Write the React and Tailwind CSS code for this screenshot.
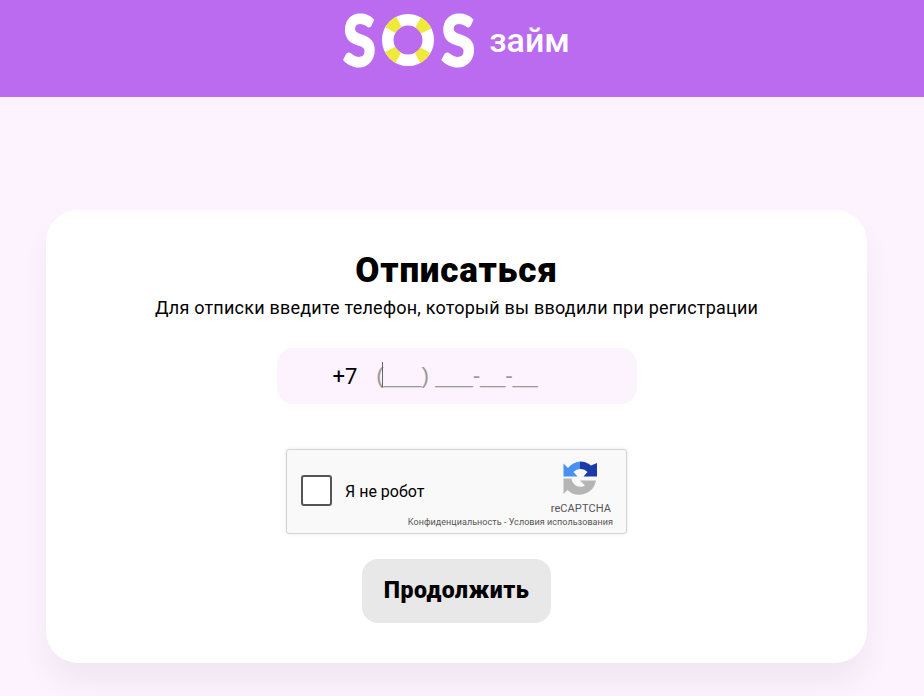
import React from 'react';

function LifeRing() {
    return (
        <svg width="52" height="52" viewBox="0 0 54 54" className="shrink-0">
            <circle cx="27" cy="27" r="21" fill="none" stroke="#ffffff" strokeWidth="12" />
            <circle cx="27" cy="27" r="21" fill="none" stroke="#efe93a" strokeWidth="12" strokeDasharray="12.5 20.49" strokeDashoffset="6.25" transform="rotate(45 27 27)" />
        </svg>
    );
}

function RecaptchaLogo() {
    return (
        <svg width="35" height="36" viewBox="0 0 35 36">
            <path d="M17 0.5 L17 8 A9 9 0 0 0 10.5 11 L14.5 15.5 L0.5 15.5 L0.5 2.5 L5 7 A17 17 0 0 1 17 0.5 Z" fill="#4a90f2" />
            <path d="M17 0.5 A17 17 0 0 1 28 4.5 L34 2 L34 15.5 L20.5 15.5 L24.5 11 A9 9 0 0 0 17 8 Z" fill="#1c3aa9" />
            <path d="M0.5 17.5 L8.5 17.5 A9 9 0 0 0 22 24.5 L17 19.5 L33 19.5 A17 17 0 0 1 4.5 29 L0.5 33 Z" fill="#b5b5b5" />
        </svg>
    );
}

function Recaptcha() {
    return (
        <div className="w-[341px] h-[85px] mt-[45px] bg-[#f9f9f9] border border-[#d3d3d3] rounded-[3px] shadow-[0_0_4px_rgba(0,0,0,0.08)] flex font-['Roboto',sans-serif]">
            <div className="flex items-center flex-1 min-w-0 pl-[14px] pb-[2px]">
                <div className="w-[31px] h-[31px] bg-white border-2 border-[#555555] rounded-[3px] shrink-0"></div>
                <span className="ml-[13px] mt-[2px] text-[16px] text-black whitespace-nowrap">Я не робот</span>
            </div>
            <div className="flex flex-col items-end shrink-0 pr-[13px] pt-[11px] text-[#555555]">
                <div className="pr-[15px]">
                    <RecaptchaLogo />
                </div>
                <span className="text-[11px] leading-[13px] mt-[5px] pr-[2px] tracking-[0.1px]">reCAPTCHA</span>
                <span className="text-[9px] leading-[11px] mt-[2px] whitespace-nowrap tracking-[0.05px]">Конфиденциальность - Условия использования</span>
            </div>
        </div>
    );
}

export default function App() {
    return (
        <div className="min-h-[696px] bg-[#fdf3fe] font-['Roboto',sans-serif] overflow-hidden">
            {/* Header */}
            <div className="h-[97px] bg-[#bb6bf0] flex justify-center">
                <div className="flex items-start text-white pr-[11px]">
                    <span className="text-[70px] leading-[78px] font-black font-['Lato',sans-serif] scale-x-[0.85] origin-left [-webkit-text-stroke:2px_white]">S</span>
                    <div className="mt-[14px] mr-[5px]">
                        <LifeRing />
                    </div>
                    <span className="text-[70px] leading-[78px] font-black font-['Lato',sans-serif] scale-x-[0.88] [-webkit-text-stroke:2px_white]">S</span>
                    <span className="ml-[12px] mt-[18px] text-[34px] leading-[44px] font-medium whitespace-nowrap">займ</span>
                </div>
            </div>

            {/* Card */}
            <div className="ml-[46px] mt-[113px] w-[821px] h-[453px] bg-white rounded-[32px] shadow-[0_20px_30px_rgba(0,0,0,0.05)] flex flex-col items-center pt-[41px]">
                <h1 className="text-[35px] leading-[40px] font-black text-black tracking-[0.8px]">Отписаться</h1>
                <p className="mt-[6px] text-[18px] leading-[22px] text-black whitespace-nowrap tracking-[0.22px]">Для отписки введите телефон, который вы вводили при регистрации</p>

                <div className="mt-[29px] w-[360px] h-[56px] bg-[#fdf3fe] rounded-[16px] flex items-center pl-[56px] text-[22px]">
                    <span className="text-black">+7</span>
                    <span className="relative ml-[19px] text-[22.5px] text-[#999999] whitespace-nowrap font-['Liberation_Sans',sans-serif]">
                        (___) ___-__-__
                        <span className="absolute left-[6px] top-[3px] w-px h-[25px] bg-[#666666]"></span>
                    </span>
                </div>

                <Recaptcha />

                <button className="mt-[25px] w-[189px] h-[64px] bg-[#e8e8e8] rounded-[16px] text-[23px] font-black text-black tracking-[0.5px]">
                    Продолжить
                </button>
            </div>
        </div>
    );
}
